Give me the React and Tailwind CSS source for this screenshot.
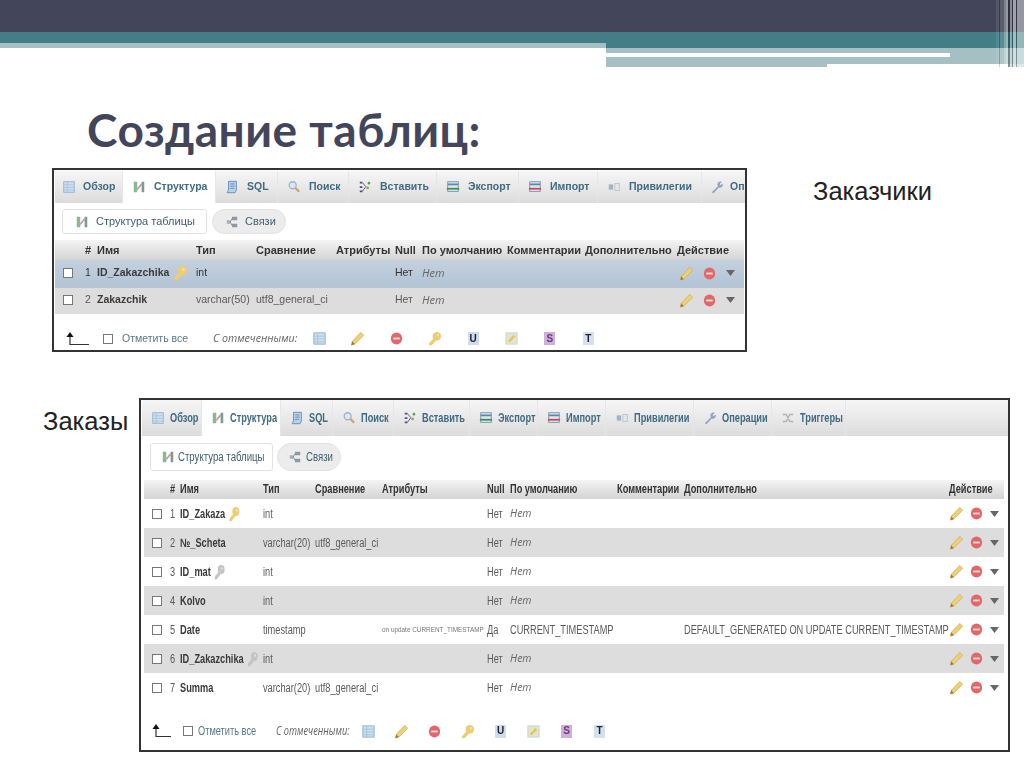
const T1_COLS = "grid-cols-[30px_12px_99px_60px_80px_59px_27px_85px_78px_92px_67px]";
const T2_COLS = "grid-cols-[26px_10px_83px_52px_67px_105px_23px_107px_67px_265px_55px]";

const Svg = ({ children, size = 14 }) => (
  <svg width={size} height={size} viewBox="0 0 16 16" className="shrink-0">{children}</svg>
);

const BrowseIcon = ({ size }) => (
  <Svg size={size}>
    <rect x="2" y="2" width="12" height="12" fill="#cfe0ef" stroke="#8fb0cf" />
    <path d="M2 5.5h12M2 8.5h12M2 11.5h12M6 2v12" stroke="#a6c3dc" />
  </Svg>
);
const StructureIcon = () => (
  <Svg>
    <path d="M2 2h4v12H2z" fill="#8cb98c" />
    <path d="M11 2h3v12h-3z" fill="#7d9d8c" />
    <path d="M6 9l5-6v3L6 12z" fill="#c98ba8" />
  </Svg>
);
const SqlIcon = () => (
  <Svg>
    <path d="M4 1.5h9v10l-1.5 3h-9l1.5-3z" fill="#b9d2ea" stroke="#5d8cb8" />
    <path d="M6 4.5h5M6 7h5M5.5 9.5h5" stroke="#5d8cb8" />
  </Svg>
);
const SearchIcon = () => (
  <Svg>
    <circle cx="6.5" cy="6" r="4" fill="#dbe7f2" stroke="#9db4c9" strokeWidth="1.5" />
    <path d="M9.5 9l4.5 4.5" stroke="#c9a678" strokeWidth="2.5" />
  </Svg>
);
const InsertIcon = () => (
  <Svg>
    <path d="M2 2h3v2H2zM2 7h3v2H2zM2 12h3v2H2z" fill="#5b4a8a" />
    <path d="M5 3l4 4.5L5 13" stroke="#5b4a8a" fill="none" />
    <path d="M11 3.5h3M12.5 2v3" stroke="#3f9a3f" strokeWidth="1.5" />
    <circle cx="11" cy="9" r="1.5" fill="#7fb04f" />
  </Svg>
);
const TransferIcon = ({ arrow }) => (
  <Svg>
    <rect x="2" y="2" width="12" height="11" fill="#dbe6ef" stroke="#6f93ac" />
    <path d="M2 5h12" stroke="#5d88a8" strokeWidth="2" />
    <path d="M1 10h14" stroke={arrow} strokeWidth="2" />
  </Svg>
);
const PrivilegesIcon = () => (
  <Svg>
    <rect x="2" y="5" width="5" height="6" fill="#9fb4c8" />
    <rect x="9" y="4" width="5" height="8" fill="#e4e8ec" stroke="#b9c2ca" />
  </Svg>
);
const WrenchIcon = () => (
  <Svg>
    <path d="M2 14l7-7a3.5 3.5 0 0 1 4.5-5L11 4.5 12 6l2.5-2A3.5 3.5 0 0 1 10 8.5L4 15z" fill="#8fa4c4" />
  </Svg>
);
const TriggerIcon = () => (
  <Svg>
    <path d="M2 4h4l4 8h4M2 12h4l4-8h4" stroke="#b0b5b0" strokeWidth="1.5" fill="none" />
  </Svg>
);
const RelationIcon = () => (
  <Svg>
    <path d="M8 2h6v4H8zM8 10h6v4H8z" fill="#8d9aa5" />
    <path d="M2 6h4v4H2z" fill="#a4afb8" />
    <path d="M6 8l2-4M6 8l2 4" stroke="#7e8a94" />
  </Svg>
);
const KeyIcon = ({ color = "#f0cb70", size = 16 }) => (
  <Svg size={size}>
    <circle cx="10.5" cy="5.5" r="4.5" fill={color} />
    <path d="M8 7L2 13l.5 2.5L5 15l5-5z" fill={color} />
    <circle cx="11.5" cy="4.5" r="1.2" fill="#fff" fillOpacity="0.55" />
  </Svg>
);
const PencilIcon = () => (
  <Svg size={15}>
    <path d="M11.5 1.5l3 3L5 14l-3.5 1L2.5 11z" fill="#efd175" stroke="#cfa94a" strokeWidth="0.8" />
    <path d="M2.5 11L5 14l-3.5 1z" fill="#8a7a4a" />
  </Svg>
);
const MinusIcon = () => (
  <Svg size={15}>
    <ellipse cx="8" cy="8" rx="6" ry="6.5" fill="#e0676a" />
    <path d="M4.5 8h7" stroke="#f7dcdc" strokeWidth="2" />
  </Svg>
);
const CaretIcon = () => (
  <svg width="9" height="6" viewBox="0 0 9 6" className="shrink-0 ml-[1px]">
    <path d="M0 0h9L4.5 6z" fill="#666" />
  </svg>
);
const LetterIcon = ({ children, className }) => (
  <span className={`w-[11px] h-[13px] flex items-center justify-center text-[10px] font-bold leading-none ${className}`}>
    {children}
  </span>
);
const IndexIcon = () => (
  <Svg size={15}>
    <rect x="2" y="2" width="12" height="12" fill="#dfe6c9" stroke="#c9d4dc" />
    <path d="M4 11l6-7 2 2-6 6z" fill="#eec15a" />
  </Svg>
);
const UpArrow = ({ width }) => (
  <svg width={width} height="14" viewBox={`0 0 ${width} 14`} className="shrink-0">
    <path d={`M4 3v9.5H${width}`} stroke="#333" fill="none" strokeWidth="1.2" />
    <path d="M0.5 5L4 0l3.5 5z" fill="#111" />
  </svg>
);

const TAB_ICONS = {
  Обзор: <BrowseIcon />,
  Структура: <StructureIcon />,
  SQL: <SqlIcon />,
  Поиск: <SearchIcon />,
  Вставить: <InsertIcon />,
  Экспорт: <TransferIcon arrow="#3f8f4f" />,
  Импорт: <TransferIcon arrow="#d0445a" />,
  Привилегии: <PrivilegesIcon />,
  Операции: <WrenchIcon />,
  Оп: <WrenchIcon />,
  Триггеры: <TriggerIcon />,
};

const T1_PAD = "pl-[9px] gap-[8px]";
const T2_PAD = "pl-[9px] gap-[5px]";

const T1_TABS = [
  ["Обзор", "w-[68px]", "pl-[7px] gap-[7px]"], ["Структура", "w-[93px]", T1_PAD], ["SQL", "w-[62px]", T1_PAD], ["Поиск", "w-[71px]", T1_PAD],
  ["Вставить", "w-[88px]", T1_PAD], ["Экспорт", "w-[82px]", T1_PAD], ["Импорт", "w-[79px]", T1_PAD], ["Привилегии", "w-[104px]", T1_PAD], ["Оп", "w-[45px]", "pl-[8px] gap-[6px]"],
];
const T2_TABS = [
  ["Обзор", "w-[60px]"], ["Структура", "w-[79px]"], ["SQL", "w-[52px]"], ["Поиск", "w-[61px]"],
  ["Вставить", "w-[76px]"], ["Экспорт", "w-[68px]"], ["Импорт", "w-[68px]"], ["Привилегии", "w-[88px]"],
  ["Операции", "w-[78px]"], ["Триггеры", "w-[74px]"],
].map(([label, w]) => [label, w, T2_PAD]);

const HEAD = ["", "#", "Имя", "Тип", "Сравнение", "Атрибуты", "Null", "По умолчанию", "Комментарии", "Дополнительно", "Действие"];

const T1_ROWS = [
  { n: 1, name: "ID_Zakazchika", key: "gold", type: "int", bg: "bg-gradient-to-b from-[#c3d0de] to-[#b4c4d5]", text: "text-[#333]" },
  { n: 2, name: "Zakazchik", type: "varchar(50)", coll: "utf8_general_ci", bg: "bg-[#dddddd]" },
];
const T2_ROWS = [
  { n: 1, name: "ID_Zakaza", key: "gold", type: "int", bg: "bg-white" },
  { n: 2, name: "№_Scheta", type: "varchar(20)", coll: "utf8_general_ci", bg: "bg-[#dddddd]" },
  { n: 3, name: "ID_mat", key: "gray", type: "int", bg: "bg-white" },
  { n: 4, name: "Kolvo", type: "int", bg: "bg-[#dddddd]" },
  { n: 5, name: "Date", type: "timestamp", attr: "on update CURRENT_TIMESTAMP", nul: "Да", def: "CURRENT_TIMESTAMP", extra: "DEFAULT_GENERATED ON UPDATE CURRENT_TIMESTAMP", bg: "bg-white" },
  { n: 6, name: "ID_Zakazchika", key: "gray", type: "int", bg: "bg-[#dddddd]" },
  { n: 7, name: "Summa", type: "varchar(20)", coll: "utf8_general_ci", bg: "bg-white" },
];

// the second shot is squeezed sideways, so its text runs narrow
const Txt = ({ narrow, className = "", children }) => (
  <span className={`inline-block whitespace-nowrap ${narrow ? "origin-left scale-x-[0.77]" : ""} ${className}`}>{children}</span>
);

const Checkbox = ({ className = "" }) => (
  <span className={`block w-[10px] h-[10px] bg-white border border-[#777] ${className}`} />
);

function Tabs({ tabs, narrow, height }) {
  return (
    <div className={`flex ${height} bg-gradient-to-b from-[#f6f6f6] to-[#dcdcdc] overflow-hidden`}>
      {tabs.map(([label, w, pad]) => (
        <div
          key={label}
          className={`${w} ${pad} shrink-0 flex items-center ${narrow ? "text-[12px]" : "text-[10.5px]"} font-bold text-[#3f6b80] border-r border-[#e6e6e6] ${label === "Структура" ? "bg-white" : ""}`}
        >
          {TAB_ICONS[label]}
          <Txt narrow={narrow}>{label}</Txt>
        </div>
      ))}
    </div>
  );
}

function SubTabs({ narrow, height, firstW, pillW }) {
  return (
    <div className={`flex items-start ${height} ${narrow ? "pl-[8px] pt-[7px] gap-[4px] text-[12.5px]" : "pl-[7px] pt-[6px] gap-[5px] text-[11px]"} text-[#3f5f70]`}>
      <div className={`${firstW} ${narrow ? "h-[28px] gap-[3px] pl-[10px]" : "h-[25px] gap-[7px] pl-[12px]"} flex items-center bg-white border border-[#e2e2e2] rounded-[3px]`}>
        <StructureIcon />
        <Txt narrow={narrow}>Структура таблицы</Txt>
      </div>
      <div className={`${pillW} ${narrow ? "h-[28px] gap-[4px] pl-[10px]" : "h-[25px] gap-[6px] pl-[12px]"} flex items-center bg-[#ececec] border border-[#e2e2e2] rounded-full`}>
        <RelationIcon />
        <Txt narrow={narrow}>Связи</Txt>
      </div>
    </div>
  );
}

function Row({ row, cols, narrow, height }) {
  const base = row.text || "text-[#5a5a5a]";
  return (
    <div className={`grid ${cols} ${height} items-center ${narrow ? "text-[12px]" : "text-[10.5px] pb-[2px]"} ${row.bg} ${base}`}>
      <Checkbox className="ml-[8px]" />
      <Txt narrow={narrow} className="justify-self-start">{row.n}</Txt>
      <Txt narrow={narrow} className="font-bold text-[#3a3a3a]">
        <span className="flex items-center gap-[3px]">
          {row.name}
          {row.key === "gold" && <KeyIcon />}
          {row.key === "gray" && <KeyIcon color="#c4c4c4" />}
        </span>
      </Txt>
      <Txt narrow={narrow}>{row.type}</Txt>
      <Txt narrow={narrow}>{row.coll}</Txt>
      {row.attr ? <span className="whitespace-nowrap text-[6.4px] text-[#777]">{row.attr}</span> : <span />}
      <Txt narrow={narrow}>{row.nul || "Нет"}</Txt>
      {row.def ? <Txt narrow={narrow}>{row.def}</Txt> : <span className={`font-['Open_Sans',sans-serif] italic text-[#666] ${narrow ? "text-[10.5px]" : "text-[11px]"}`}>Нет</span>}
      <span />
      <Txt narrow={narrow}>{row.extra}</Txt>
      <div className={`flex items-center ${narrow ? "gap-[5px]" : "gap-[8px] pl-[2px]"}`}>
        <PencilIcon />
        <MinusIcon />
        <CaretIcon />
      </div>
    </div>
  );
}

function HeadRow({ cols, narrow, height }) {
  return (
    <div className={`grid ${cols} ${height} items-center ${narrow ? "text-[12px] pb-[3px]" : "text-[11px]"} font-bold text-[#333] bg-gradient-to-b from-[#f4f4f4] to-[#d4d4d4]`}>
      {HEAD.map((h, i) => (
        <Txt key={i} narrow={narrow}>{h}</Txt>
      ))}
    </div>
  );
}

// every bulk icon sits in a same-width slot so the spacing stays even
const Slot = ({ children }) => <span className="w-[15px] flex justify-center shrink-0">{children}</span>;

function BulkActions({ narrow, className, actionsGap }) {
  return (
    <div className={`flex items-center ${className}`}>
      <UpArrow width={narrow ? 19 : 23} />
      <Checkbox className={narrow ? "ml-[12px]" : "ml-[14px]"} />
      <Txt narrow={narrow} className={`text-[#56788a] ${narrow ? "text-[12px] ml-[5px] w-[78px]" : "text-[10.5px] ml-[9px] w-[91px]"}`}>Отметить все</Txt>
      <Txt narrow={narrow} className={`font-['Open_Sans',sans-serif] italic text-[#666] ${narrow ? "text-[12px] w-[85px]" : "text-[10.6px] w-[99px]"}`}>С отмеченными:</Txt>
      <div className={`flex items-center ${actionsGap}`}>
        <Slot><BrowseIcon size={15} /></Slot>
        <Slot><PencilIcon /></Slot>
        <Slot><MinusIcon /></Slot>
        <Slot><KeyIcon size={15} /></Slot>
        <Slot><LetterIcon className="bg-[#cfdcea] text-[#223]">U</LetterIcon></Slot>
        <Slot><IndexIcon /></Slot>
        <Slot><LetterIcon className="bg-[#c9b4d6] text-[#7a2f8a]">S</LetterIcon></Slot>
        <Slot><LetterIcon className="bg-[#d4e2ee] text-[#223]">T</LetterIcon></Slot>
      </div>
    </div>
  );
}

export default function App() {
  return (
    <div className="relative w-[1024px] h-[767px] bg-white overflow-hidden font-['Liberation_Sans',sans-serif]">
      {/* slide header bands */}
      <div className="h-[32px] bg-[#43465a]" />
      <div className="h-[11px] bg-[#437e87]" />
      <div className="flex h-[24px]">
        <div className="w-[606px]">
          <div className="h-[5px] bg-[#a5bfc3]" />
        </div>
        <div className="flex-1">
          <div className="h-[5px] bg-[#437e87]" />
          <div className="h-[5px] bg-[#a5bfc3]" />
          <div className="flex h-[4px]">
            <div className="w-[344px] bg-white" />
            <div className="flex-1 bg-[#a5bfc3]" />
          </div>
          <div className="h-[7px] bg-[#a5bfc3]" />
          <div className="flex h-[3px]">
            <div className="w-[221px] bg-[#a5bfc3]" />
            <div className="flex-1 bg-white" />
            <div className="w-[16px] bg-[#c5d6d8]" />
          </div>
        </div>
      </div>
      {/* vertical stripes on the right edge */}
      <div className="absolute right-0 top-0 h-[67px] w-[28px] flex">
        <div className="w-[3px] bg-[#ffffff18]" />
        <div className="w-[1px] bg-[#00000030]" />
        <div className="w-[4px] bg-[#ffffff20]" />
        <div className="w-[2px] bg-[#ffffff50]" />
        <div className="w-[2px] bg-[#ffffff70]" />
        <div className="w-[2px] bg-[#00000050]" />
        <div className="w-[2px] bg-[#ffffff60]" />
        <div className="w-[1px] bg-[#00000050]" />
        <div className="w-[3px] bg-[#ffffff80]" />
        <div className="w-[1px] bg-[#00000040]" />
        <div className="w-[7px] bg-[#ffffff70]" />
      </div>

      <h1 className="h-[101px] pl-[87px] pt-[31px] text-[46px] leading-[64px] font-bold tracking-[0.5px] text-[#43465a] font-['Lato',sans-serif]">
        Создание таблиц:
      </h1>

      <div className="flex items-start pl-[52px]">
        <div className="w-[695px] h-[184px] border-2 border-[#333] pl-px pt-px bg-white text-[#333] blur-[0.4px] overflow-hidden">
          <Tabs tabs={T1_TABS} height="h-[32px]" />
          <SubTabs height="h-[37px]" firstW="w-[145px]" pillW="w-[74px]" />
          <div className="w-[689px]">
            <HeadRow cols={T1_COLS} height="h-[20px]" />
            <Row row={T1_ROWS[0]} cols={T1_COLS} height="h-[28px]" />
            <Row row={T1_ROWS[1]} cols={T1_COLS} height="h-[26px]" />
          </div>
          <BulkActions className="pl-[11px] pt-[17px]" actionsGap="gap-[23.4px]" />
        </div>
        <div className="ml-[66px] mt-[9px] text-[25.5px] leading-[28px] text-[#222]">Заказчики</div>
      </div>

      <div className="flex items-start pl-[43px] mt-[46px]">
        <div className="w-[96px] mt-[9px] text-[25.5px] leading-[28px] text-[#222]">Заказы</div>
        <div className="w-[871px] h-[354px] border-2 border-[#333] pl-px bg-white text-[#333] blur-[0.4px] overflow-hidden">
          <Tabs tabs={T2_TABS} narrow height="h-[36px]" />
          <SubTabs narrow height="h-[44px]" firstW="w-[123px]" pillW="w-[64px]" />
          <div className="ml-[2px] w-[860px]">
            <HeadRow cols={T2_COLS} narrow height="h-[19px]" />
            {T2_ROWS.map((r) => (
              <Row key={r.n} row={r} cols={T2_COLS} narrow height="h-[29px]" />
            ))}
          </div>
          <BulkActions narrow className="pl-[10px] pt-[20px]" actionsGap="gap-[18px]" />
        </div>
      </div>
    </div>
  );
}
